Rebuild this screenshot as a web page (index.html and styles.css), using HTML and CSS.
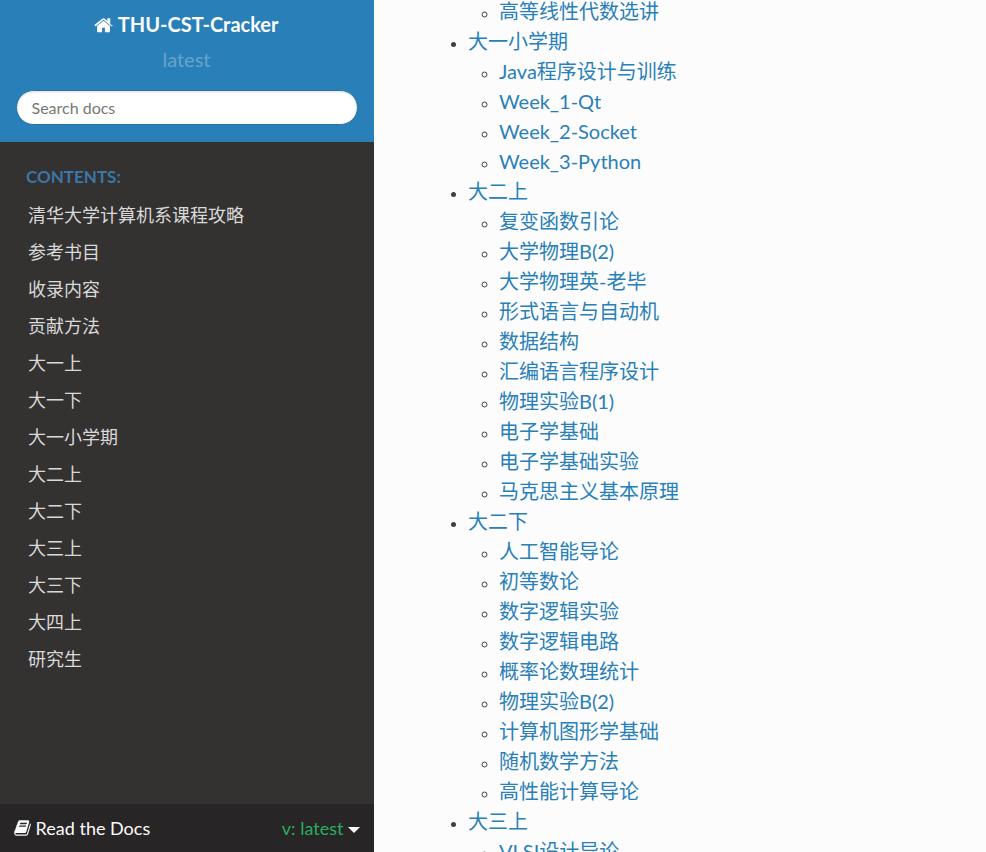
FILE: index.html
```html
<!DOCTYPE html>
<html lang="zh-CN">
<head>
<meta charset="utf-8">
<title>THU-CST-Cracker</title>
<link rel="stylesheet" href="styles.css">
</head>
<body>
<div class="layout">
  <nav class="sidebar">
    <div class="search">
      <a class="brand" href="#"><svg class="home" viewBox="0 0 1664 1792" aria-hidden="true"><path fill="currentColor" d="M1408 992v480q0 26-19 45t-45 19H960v-384H704v384H320q-26 0-45-19t-19-45V992q0-1 .5-3t.5-3l575-474 575 474q1 2 1 6zm223-69-62 74q-8 9-21 11h-3q-13 0-21-7L832 424 140 1001q-12 8-24 7-13-2-21-11l-62-74q-8-10-7-23.500t11-21.500L756 311q32-26 76-26t76 26l272 227V321q0-14 9-23t23-9h192q14 0 23 9t9 23v480l219 182q10 8 11 21.500t-7 23.500z"/></svg> THU-CST-Cracker</a>
      <div class="version">latest</div>
      <input class="search-input" type="text" placeholder="Search docs">
    </div>
    <div class="menu">
      <p class="caption">CONTENTS:</p>
      <ul class="menu-list">
        <li><a href="#">清华大学计算机系课程攻略</a></li>
        <li><a href="#">参考书目</a></li>
        <li><a href="#">收录内容</a></li>
        <li><a href="#">贡献方法</a></li>
        <li><a href="#">大一上</a></li>
        <li><a href="#">大一下</a></li>
        <li><a href="#">大一小学期</a></li>
        <li><a href="#">大二上</a></li>
        <li><a href="#">大二下</a></li>
        <li><a href="#">大三上</a></li>
        <li><a href="#">大三下</a></li>
        <li><a href="#">大四上</a></li>
        <li><a href="#">研究生</a></li>
      </ul>
    </div>
    <div class="footer">
      <span class="rtd"><svg class="book" viewBox="0 0 1664 1792" aria-hidden="true"><path fill="currentColor" d="M1639 478q40 57 18 129l-275 906q-19 64-76.500 107.500T1183 1664H260q-77 0-148.500-53.500T12 1479q-24-67-2-127 0-4 3-27t4-37q1-8-3-21.500t-3-19.500q2-11 8-21t16.500-23.500T52 1179q23-38 45-91.500t30-91.500q3-10 .5-30t-.5-28q3-11 17-28t17-23q21-36 42-92t25-90q1-9-2.500-32t.5-28q4-13 22-30.500t22-22.500q19-26 42.500-84.500T339 410q1-8-3-25.500t-2-26.500q2-8 9-18t18-23 17-21q8-12 16.500-30.500t15-35 16-36 19.500-32 26.500-23.500 36-11.500T555 131l-1 3q38-9 51-9h761q74 0 114 56t18 130l-274 906q-36 119-71.500 153.500T1024 1405H155q-27 0-38 15-11 16-1 43 24 70 144 70h923q29 0 56-15.500t35-41.500l300-987q7-22 5-57 38 15 59 43zm-1064 2q-4 13 2 22.500t20 9.500h608q13 0 25.500-9.500T1247 480l21-64q4-13-2-22.500t-20-9.500H638q-13 0-25.500 9.500T596 416zm-83 256q-4 13 2 22.500t20 9.500h608q13 0 25.500-9.500T1164 736l21-64q4-13-2-22.500t-20-9.500H555q-13 0-25.500 9.500T513 672z"/></svg> Read the Docs</span>
      <span class="current">v: latest <span class="caret"></span></span>
    </div>
  </nav>
  <main class="content">
    <ul class="toc">
      <li>
        <ul>
          <li><a href="#">高等线性代数选讲</a></li>
        </ul>
      </li>
      <li><a href="#">大一小学期</a>
        <ul>
          <li><a href="#">Java程序设计与训练</a></li>
          <li><a href="#">Week_1-Qt</a></li>
          <li><a href="#">Week_2-Socket</a></li>
          <li><a href="#">Week_3-Python</a></li>
        </ul>
      </li>
      <li><a href="#">大二上</a>
        <ul>
          <li><a href="#">复变函数引论</a></li>
          <li><a href="#">大学物理B(2)</a></li>
          <li><a href="#">大学物理英-老毕</a></li>
          <li><a href="#">形式语言与自动机</a></li>
          <li><a href="#">数据结构</a></li>
          <li><a href="#">汇编语言程序设计</a></li>
          <li><a href="#">物理实验B(1)</a></li>
          <li><a href="#">电子学基础</a></li>
          <li><a href="#">电子学基础实验</a></li>
          <li><a href="#">马克思主义基本原理</a></li>
        </ul>
      </li>
      <li><a href="#">大二下</a>
        <ul>
          <li><a href="#">人工智能导论</a></li>
          <li><a href="#">初等数论</a></li>
          <li><a href="#">数字逻辑实验</a></li>
          <li><a href="#">数字逻辑电路</a></li>
          <li><a href="#">概率论数理统计</a></li>
          <li><a href="#">物理实验B(2)</a></li>
          <li><a href="#">计算机图形学基础</a></li>
          <li><a href="#">随机数学方法</a></li>
          <li><a href="#">高性能计算导论</a></li>
        </ul>
      </li>
      <li><a href="#">大三上</a>
        <ul>
          <li><a href="#">VLSI设计导论</a></li>
        </ul>
      </li>
    </ul>
  </main>
</div>
</body>
</html>
```
FILE: styles.css
```css
* { box-sizing: border-box; }
html, body { margin: 0; height: 100%; overflow: hidden; }
body {
  font-family: Lato, "Noto Sans CJK SC", sans-serif;
  background: #fcfcfc;
  color: #404040;
}
a { text-decoration: none; }
.layout { display: flex; height: 852px; overflow: hidden; }
.sidebar {
  width: 374px;
  flex: none;
  background: #343131;
  display: flex;
  flex-direction: column;
}
.search {
  background: #2980b9;
  height: 142px;
  padding: 9px 16px 0 15px;
  display: flex;
  flex-direction: column;
  align-items: center;
}
.brand { color: #fcfcfc; font-size: 20px; font-weight: 700; line-height: 30px; }
.home { width: 19px; height: 20px; vertical-align: -3px; }
.version { color: rgba(255,255,255,.3); font-size: 20px; line-height: 30px; margin-top: 5px; }
.search-input {
  width: 342px;
  height: 35px;
  margin-top: 16px;
  flex: none;
  border: 1px solid #2472a4;
  border-radius: 50px;
  padding: 6px 15px;
  background: #fff;
  font: 16px Lato, sans-serif;
  box-shadow: inset 0 1px 3px #ddd;
  color: #333;
}
.search-input::placeholder { color: #777; opacity: 1; }
.menu { flex: 1; padding-top: 21px; }
.caption {
  margin: 0;
  padding-left: 26px;
  color: #3a77a8;
  font-size: 17px;
  font-weight: 700;
  line-height: 27px;
}
.menu-list { list-style: none; margin: 7px 0 0; padding: 0; }
.menu-list a {
  display: block;
  height: 37px;
  padding-left: 28px;
  color: #d9d9d9;
  font-size: 18px;
  line-height: 37px;
}
.footer {
  height: 48px;
  background: #272525;
  display: flex;
  align-items: center;
  justify-content: space-between;
  padding: 0 14px 1px;
  font-size: 18px;
}
.rtd { color: #fcfcfc; }
.book { width: 17px; height: 18px; vertical-align: -2px; }
.current { color: #27ae60; }
.caret {
  display: inline-block;
  width: 0; height: 0;
  border-left: 6px solid transparent;
  border-right: 6px solid transparent;
  border-top: 6px solid #fcfcfc;
  vertical-align: 2px;
}
.content { flex: 1; background: #fcfcfc; overflow: hidden; }
.toc {
  margin: -4px 0 0;
  padding: 0 0 0 94px;
  list-style: disc;
  font-size: 20px;
  line-height: 30px;
}
.toc a { color: #2980b9; }
.toc ul { list-style: circle; margin: 0; padding: 0 0 0 31px; }
.toc > li:first-child { list-style: none; }
.toc li::marker { color: #404040; font-size: 16px; }
```
